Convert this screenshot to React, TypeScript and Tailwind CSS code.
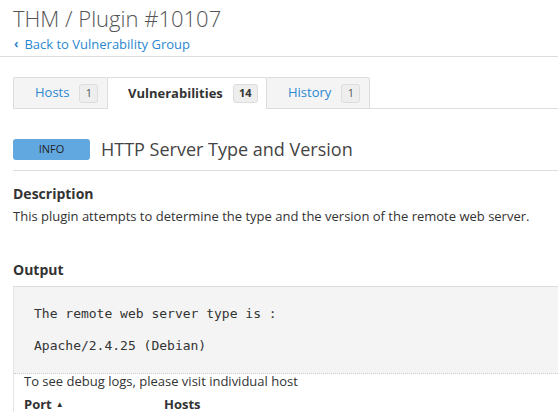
export default function App() {
  return (
    <div className="min-h-screen bg-white font-['Open_Sans',sans-serif] text-[#333] overflow-hidden">
      <div className="pl-[13px] pt-[2px]">
        <h1 className="text-[22px] leading-[32px] font-light text-[#555]">THM / Plugin #10107</h1>
        <a className="mt-[1px] flex items-center gap-[6px] pl-[1px] text-[13px] leading-[18px] text-[#2a88d0]">
          <span className="text-[12px] font-bold">‹</span>
          <span>Back to Vulnerability Group</span>
        </a>
      </div>
      <div className="mt-[3px] h-px bg-[#ddd]" />

      <div className="pl-[13px]">
        <div className="mt-[20px] flex border-b border-[#ddd]">
          <Tab label="Hosts" count="1" width="w-[94px]" />
          <Tab label="Vulnerabilities" count="14" width="w-[160px]" active />
          <Tab label="History" count="1" width="w-[103px]" />
        </div>

        <div className="mt-[28px] flex items-center gap-[11px]">
          <span className="flex h-[21px] w-[77px] items-center justify-center rounded-[3px] bg-[#62a8e0] text-[11px] text-[#222]">
            INFO
          </span>
          <h2 className="text-[18px] leading-[24px] font-normal text-[#444]">HTTP Server Type and Version</h2>
        </div>
        <div className="mt-[9px] h-px bg-[#ddd]" />

        <h3 className="mt-[13px] text-[14px] leading-[20px] font-bold text-[#333]">Description</h3>
        <p className="mt-[2px] text-[13px] leading-[20px] text-[#333]">
          This plugin attempts to determine the type and the version of the remote web server.
        </p>

        <h3 className="mt-[34px] text-[14px] leading-[20px] font-bold text-[#333]">Output</h3>

        <div className="mt-[6px] border-l border-t border-l-[#e4e4e4] border-t-[#ddd]">
          <div className="border-b border-dotted border-[#ccc] bg-[#f4f4f4] pl-[20px] pt-[19px] pb-[19px]">
            <pre className="font-['DejaVu_Sans_Mono',monospace] text-[13px] leading-[16px] text-[#333]">
              {"The remote web server type is :\n\nApache/2.4.25 (Debian)"}
            </pre>
          </div>
          <div className="pl-[10px]">
            <p className="text-[13px] leading-[14px] text-[#333]">To see debug logs, please visit individual host</p>
            <div className="mt-[8px] flex text-[13px] leading-[16px] font-bold text-[#333]">
              <span className="w-[140px] flex items-center gap-[4px]">
                Port <span className="text-[8px]">▲</span>
              </span>
              <span>Hosts</span>
            </div>
          </div>
        </div>
      </div>
    </div>
  );
}

function Tab({
  label,
  count,
  width,
  active,
}: {
  label: string;
  count: string;
  width: string;
  active?: boolean;
}) {
  return (
    <div
      className={
        active
          ? `${width} -mb-px flex h-[32px] items-center gap-[10px] pl-[20px] border-x border-t border-[#ddd] bg-white`
          : `${width} -mb-px flex h-[32px] items-center gap-[10px] pl-[21px] border border-[#ddd] bg-[#f4f4f4] first:border-r-0 last:border-l-0 rounded-t-[2px]`
      }
    >
      <span className={active ? 'text-[13px] font-bold text-[#333]' : 'text-[13px] text-[#2a88d0]'}>
        {label}
      </span>
      <span
        className={
          active
            ? 'flex h-[19px] min-w-[25px] items-center justify-center rounded-[3px] border border-[#ddd] bg-[#eee] px-[5px] text-[11px] font-bold text-[#333]'
            : 'flex h-[19px] min-w-[19px] items-center justify-center rounded-[3px] border border-[#ddd] bg-[#eee] px-[5px] text-[11px] text-[#555]'
        }
      >
        {count}
      </span>
    </div>
  );
}
